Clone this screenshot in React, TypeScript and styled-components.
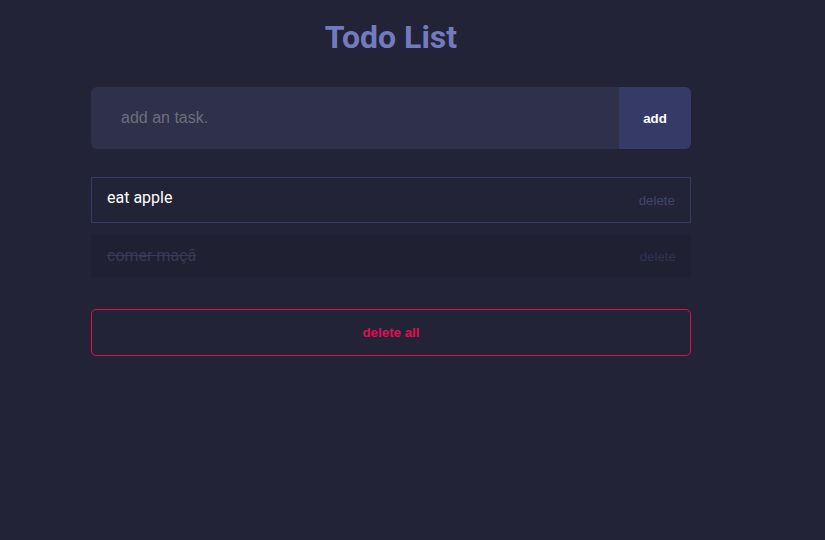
import React from "react";
import styled, { createGlobalStyle } from "styled-components";

const Global = createGlobalStyle`
  html, body { margin: 0; padding: 0; background: #222336; }
  body { font-family: Roboto, "Liberation Sans", sans-serif; }
`;

const Page = styled.div`
  width: 825px;
  height: 540px;
  background: #222336;
  box-sizing: border-box;
  padding: 19px 0 0 91px;
`;

const Container = styled.div`
  width: 600px;
  display: flex;
  flex-direction: column;
`;

const Title = styled.h1`
  margin: 0 0 31px;
  text-align: center;
  font-family: Roboto, sans-serif;
  font-weight: 700;
  font-size: 32px;
  line-height: 37px;
  color: #737bc0;
`;

const Form = styled.form`
  display: flex;
  height: 62px;
  border-radius: 6px;
  overflow: hidden;
  background: #2f3049;
  margin-bottom: 28px;
`;

const Input = styled.input`
  flex: 1;
  border: none;
  outline: none;
  background: transparent;
  padding: 0 30px;
  font-family: "Liberation Sans", Arial, sans-serif;
  font-size: 16px;
  color: #ffffff;
  &::placeholder { color: #6d6e80; }
`;

const AddButton = styled.button`
  width: 72px;
  border: none;
  background: #363a66;
  color: #ffffff;
  font-family: "Liberation Sans", Arial, sans-serif;
  font-size: 13.333px;
  font-weight: 700;
  cursor: pointer;
`;

const List = styled.ul`
  list-style: none;
  margin: 0 0 31px;
  padding: 0;
  display: flex;
  flex-direction: column;
  gap: 11px;
`;

const Item = styled.li<{ $done?: boolean }>`
  display: flex;
  align-items: center;
  justify-content: space-between;
  box-sizing: border-box;
  height: ${(p) => (p.$done ? "44px" : "46px")};
  padding: 0 15px;
  border: ${(p) => (p.$done ? "none" : "1px solid #363a66")};
  background: ${(p) => (p.$done ? "#202033" : "transparent")};
  padding-left: ${(p) => (p.$done ? "16px" : "15px")};
`;

const ItemText = styled.span<{ $done?: boolean }>`
  font-family: Roboto, sans-serif;
  font-size: 16px;
  color: ${(p) => (p.$done ? "#383a56" : "#ffffff")};
  text-decoration: ${(p) => (p.$done ? "line-through" : "none")};
  margin-bottom: ${(p) => (p.$done ? "1px" : "5px")};
`;

const DeleteButton = styled.button<{ $done?: boolean }>`
  border: none;
  background: transparent;
  padding: 0;
  font-family: "Liberation Sans", Arial, sans-serif;
  font-size: 13.333px;
  color: ${(p) => (p.$done ? "#303252" : "#3f4470")};
  cursor: pointer;
`;

const DeleteAll = styled.button`
  height: 47px;
  border: 1px solid #e0104f;
  border-radius: 5px;
  background: transparent;
  color: #e0104f;
  font-family: "Liberation Sans", Arial, sans-serif;
  font-size: 13.333px;
  font-weight: 700;
  cursor: pointer;
`;

const tasks = [
  { text: "eat apple", done: false },
  { text: "comer maçã", done: true },
];

export default function App() {
  return (
    <Page>
      <Global />
      <Container>
        <Title>Todo List</Title>
        <Form onSubmit={(e) => e.preventDefault()}>
          <Input placeholder="add an task." />
          <AddButton type="submit">add</AddButton>
        </Form>
        <List>
          {tasks.map((t) => (
            <Item key={t.text} $done={t.done}>
              <ItemText $done={t.done}>{t.text}</ItemText>
              <DeleteButton $done={t.done}>delete</DeleteButton>
            </Item>
          ))}
        </List>
        <DeleteAll>delete all</DeleteAll>
      </Container>
    </Page>
  );
}
